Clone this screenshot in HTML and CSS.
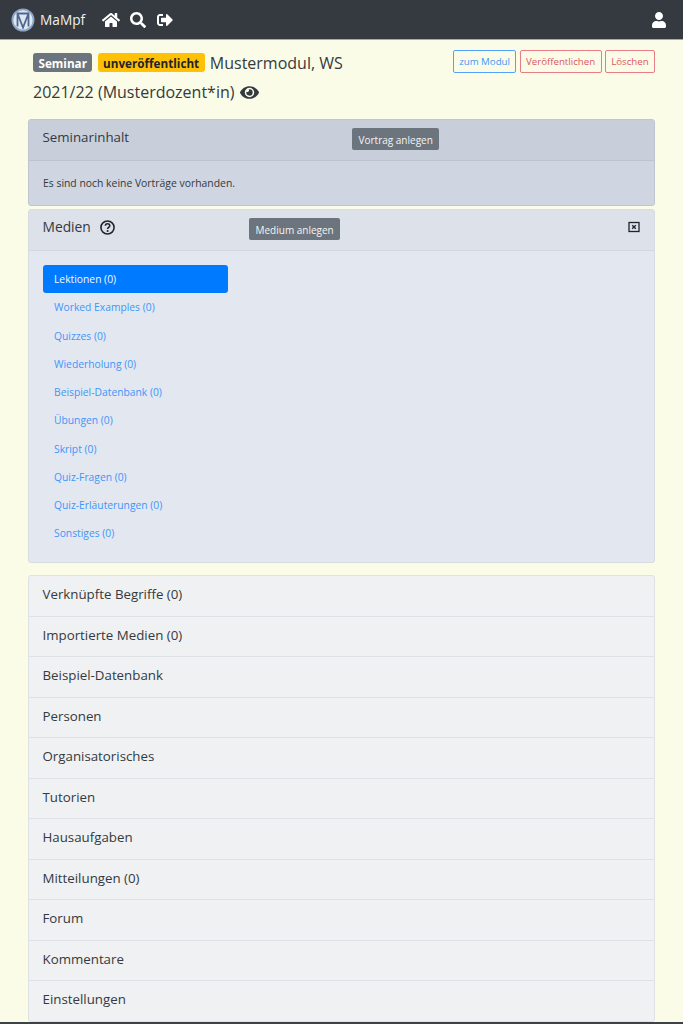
FILE: index.html
```html
<!DOCTYPE html>
<html lang="de">
<head>
<meta charset="utf-8">
<title>MaMpf</title>
<link rel="stylesheet" href="styles.css">
</head>
<body>
<nav class="navbar">
  <div class="brand">
    <svg class="logo" viewBox="0 0 24 24" width="24" height="24"><circle cx="12" cy="12" r="11.5" fill="#8ea5c6"/><circle cx="12" cy="12" r="9.700" fill="#dfe6f0"/><path d="M6.500 5.500 12 19.500 17.500 5.500M6.500 4.500v14M17.500 4.500v14M6.500 5.500h11" fill="none" stroke="#4d6890" stroke-width="1.800"/></svg>
    <span class="brand-name">MaMpf</span>
  </div>
  <svg class="nav-icon home" viewBox="0 0 576 512" width="18" height="16"><path fill="#fff" d="M280.4 148.3 96 300.1V464a16 16 0 0 0 16 16l112-.3a16 16 0 0 0 16-16V368a16 16 0 0 1 16-16h64a16 16 0 0 1 16 16v95.6a16 16 0 0 0 16 16l112 .4a16 16 0 0 0 16-16V300L295.700 148.300a12.200 12.200 0 0 0-15.300 0zM571.600 251.500 488 182.600V44a12 12 0 0 0-12-12h-56a12 12 0 0 0-12 12v72.600L318.500 43a48 48 0 0 0-61 0L4.300 251.500a12 12 0 0 0-1.600 16.900l25.500 31a12 12 0 0 0 16.900 1.600l235.200-193.700a12.200 12.200 0 0 1 15.300 0L530.900 301a12 12 0 0 0 16.900-1.600l25.500-31a12 12 0 0 0-1.700-16.900z"/></svg>
  <svg class="nav-icon search" viewBox="0 0 512 512" width="16" height="16"><path fill="#fff" d="M505 442.700 405.300 343c-4.500-4.500-10.600-7-17-7H372c27.600-35.300 44-79.700 44-128C416 93.100 322.900 0 208 0S0 93.100 0 208s93.100 208 208 208c48.300 0 92.700-16.400 128-44v16.300c0 6.400 2.500 12.500 7 17l99.700 99.700c9.400 9.400 24.600 9.400 33.900 0l28.300-28.300c9.400-9.400 9.400-24.600.1-34zM208 336c-70.700 0-128-57.200-128-128 0-70.700 57.200-128 128-128 70.700 0 128 57.200 128 128 0 70.700-57.200 128-128 128z"/></svg>
  <svg class="nav-icon signout" viewBox="0 0 512 512" width="16" height="16"><path fill="#fff" d="M497 273 329 441c-15 15-41 4.500-41-17v-96H152c-13.300 0-24-10.700-24-24v-96c0-13.300 10.700-24 24-24h136V88c0-21.400 25.900-32 41-17l168 168c9.300 9.400 9.300 24.600 0 34zM192 436v-40c0-6.600-5.400-12-12-12H96c-17.700 0-32-14.300-32-32V160c0-17.700 14.300-32 32-32h84c6.600 0 12-5.400 12-12V76c0-6.600-5.400-12-12-12H96c-53 0-96 43-96 96v192c0 53 43 96 96 96h84c6.600 0 12-5.400 12-12z"/></svg>
  <svg class="nav-icon user" viewBox="0 0 448 512" width="14" height="16"><path fill="#fff" d="M224 256c70.700 0 128-57.300 128-128S294.700 0 224 0 96 57.300 96 128s57.300 128 128 128zm89.600 32h-16.700c-22.200 10.200-46.900 16-72.900 16s-50.600-5.800-72.900-16h-16.700C60.200 288 0 348.200 0 422.400V464c0 26.500 21.500 48 48 48h352c26.500 0 48-21.500 48-48v-41.600c0-74.200-60.200-134.400-134.400-134.400z"/></svg>
</nav>

<main class="content">
  <header class="page-head">
    <h1 class="title">
      <span class="badge badge-grey">Seminar</span>
      <span class="badge badge-yellow">unveröffentlicht</span>
      <span class="title-part">Mustermodul, WS</span>
      <span class="title-part">2021/22 (Musterdozent*in)</span>
      <svg class="eye" viewBox="0 0 576 512" width="19" height="17"><path fill="#343a40" d="M572.520 241.400C518.290 135.590 410.930 64 288 64S57.680 135.640 3.480 241.410a32.350 32.350 0 0 0 0 29.190C57.710 376.410 165.070 448 288 448s230.320-71.640 284.520-177.410a32.350 32.350 0 0 0 0-29.190zM288 400a144 144 0 1 1 144-144 143.930 143.930 0 0 1-144 144zm0-240a95.310 95.310 0 0 0-25.310 3.790 47.850 47.850 0 0 1-66.900 66.900A95.780 95.780 0 1 0 288 160z"/></svg>
    </h1>
    <div class="head-actions">
      <a class="btn-out blue">zum Modul</a>
      <a class="btn-out red">Veröffentlichen</a>
      <a class="btn-out red">Löschen</a>
    </div>
  </header>

  <section class="card card-dark">
    <div class="card-head head-dark">
      <span class="card-title col-a">Seminarinhalt</span>
      <a class="btn-grey">Vortrag anlegen</a>
    </div>
    <div class="card-body-note">Es sind noch keine Vorträge vorhanden.</div>
  </section>

  <section class="card card-light">
    <div class="card-head head-light">
      <span class="card-title col-b">Medien
        <svg class="help" viewBox="0 0 16 16" width="15" height="15"><circle cx="8" cy="8" r="7" fill="none" stroke="#212529" stroke-width="1.700"/><path d="M5.700 6.200c0-3 4.700-3 4.700-.1 0 1.700-2.300 1.700-2.300 3.400" fill="none" stroke="#212529" stroke-width="1.700"/><circle cx="8.100" cy="11.700" r="1.100" fill="#212529"/></svg>
      </span>
      <a class="btn-grey">Medium anlegen</a>
      <svg class="close-box" viewBox="0 0 12 12" width="12" height="12"><rect x="1" y="1.500" width="10" height="9" fill="none" stroke="#212529" stroke-width="1.300"/><path d="m4.200 4.200 3.600 3.600m0-3.600L4.200 7.800" stroke="#212529" stroke-width="1.300"/></svg>
    </div>
    <div class="media-body">
      <ul class="pills">
        <li class="pill active">Lektionen (0)</li>
        <li class="pill">Worked Examples (0)</li>
        <li class="pill">Quizzes (0)</li>
        <li class="pill">Wiederholung (0)</li>
        <li class="pill">Beispiel-Datenbank (0)</li>
        <li class="pill">Übungen (0)</li>
        <li class="pill">Skript (0)</li>
        <li class="pill">Quiz-Fragen (0)</li>
        <li class="pill">Quiz-Erläuterungen (0)</li>
        <li class="pill">Sonstiges (0)</li>
      </ul>
    </div>
  </section>

  <section class="accordion">
    <div class="acc-row">Verknüpfte Begriffe (0)</div>
    <div class="acc-row">Importierte Medien (0)</div>
    <div class="acc-row">Beispiel-Datenbank</div>
    <div class="acc-row">Personen</div>
    <div class="acc-row">Organisatorisches</div>
    <div class="acc-row">Tutorien</div>
    <div class="acc-row">Hausaufgaben</div>
    <div class="acc-row">Mitteilungen (0)</div>
    <div class="acc-row">Forum</div>
    <div class="acc-row">Kommentare</div>
    <div class="acc-row">Einstellungen</div>
  </section>
</main>
<div class="bottom-line"></div>
</body>
</html>
```

FILE: styles.css
```css
* { box-sizing: border-box; }
html, body { margin: 0; padding: 0; }
body {
  background: #fafce8;
  font-family: "Open Sans", "Liberation Sans", sans-serif;
  color: #212529;
  height: 1024px;
  overflow: hidden;
  position: relative;
}
.navbar {
  height: 40px;
  background: #343a40;
  border-bottom: 1px solid #a8aba0;
  display: flex;
  align-items: center;
  padding: 0 17px 0 10.500px;
}
.brand { display: flex; align-items: center; }
.logo { display: block; margin-right: 5.500px; }
.brand-name { color: #f0f0f0; font-size: 13.700px; line-height: 20px; }
.nav-icon { display: block; }
.home { margin-left: 16.500px; }
.search { margin-left: 10.500px; }
.signout { margin-left: 10.500px; }
.user { margin-left: auto; }
.content { padding: 0 28px; }
.page-head { display: flex; justify-content: space-between; align-items: flex-start; height: 79px; padding-top: 8.500px; }
.title {
  margin: 0;
  width: 345px;
  padding-left: 5px;
  font-size: 16px;
  font-weight: 400;
  line-height: 29px;
  color: #343a40;
}
.badge {
  display: inline-block;
  font-size: 11.700px;
  font-weight: 700;
  line-height: 12px;
  padding: 4px 5.500px 3.500px;
  border-radius: 3px;
  vertical-align: 1px;
  margin-right: 1px;
}
.badge-grey { background: #6c757d; color: #fff; }
.badge-yellow { background: #ffc107; color: #212529; }
.eye { vertical-align: -3px; margin-left: 1px; }
.head-actions { display: flex; gap: 3.200px; margin-top: 1.500px; }
.btn-out {
  display: block;
  font-size: 9.700px;
  line-height: 15px;
  padding: 3px 5.400px;
  border: 1px solid;
  border-radius: 2px;
  white-space: nowrap;
}
.blue { color: #3f96f8; border-color: #54a3fb; }
.red { color: #e0555f; border-color: #e87d85; }
.card { border: 1px solid #c8ccd2; border-radius: 3px; overflow: hidden; }
.card-dark { height: 87px; background: #cfd5e1; border-color: #c0c5ce; }
.card-light { height: 354px; margin-top: 3px; background: #e3e7f0; border-color: #d8dbe0; }
.card-head {
  height: 41px;
  display: flex;
  align-items: flex-start;
  padding: 0 14px 0 13.500px;
  border-bottom: 1px solid;
}
.head-dark { background: #c8ceda; border-color: #bec3ce; }
.head-light { background: #dde1ea; border-color: #d3d7de; }
.card-title { font-size: 13.300px; line-height: 34px; color: #343a40; flex: none; }
.col-a { width: 309.500px; }
.col-b { width: 206.500px; line-height: 34px; font-size: 13.800px; }
.help { vertical-align: -2.500px; margin-left: 5.500px; }
.btn-grey {
  display: block;
  margin-top: 8px;
  background: #6c757d;
  color: #f4f4f4;
  font-size: 10px;
  line-height: 16px;
  padding: 4px 6.500px 2px;
  border-radius: 2px;
  white-space: nowrap;
}
.close-box { margin-left: auto; margin-top: 11px; }
.card-body-note { font-size: 10.400px; line-height: 14px; padding: 15px 14px 17px; color: #343a40; }
.media-body { padding: 14px; }
.pills { list-style: none; margin: 0; padding: 0; width: 185px; }
.pill {
  height: 28.250px;
  line-height: 28px;
  padding-left: 11px;
  font-size: 10.300px;
  color: #3f96f8;
  border-radius: 3px;
}
.pill.active { background: #007bff; color: #f4f8ff; }
.accordion {
  margin-top: 12px;
  border: 1px solid #dfe2e4;
  border-radius: 3px;
  background: #eff1f3;
  overflow: hidden;
}
.acc-row {
  height: 40.500px;
  line-height: 36.500px;
  padding-left: 13.500px;
  font-size: 13.300px;
  color: #343a40;
  border-bottom: 1px solid #dfe2e4;
}
.acc-row:last-child { height: 39.500px; border-bottom: 0; }
.bottom-line { position: absolute; left: 0; right: 0; bottom: 0; height: 2px; background: #3c4248; }
```
